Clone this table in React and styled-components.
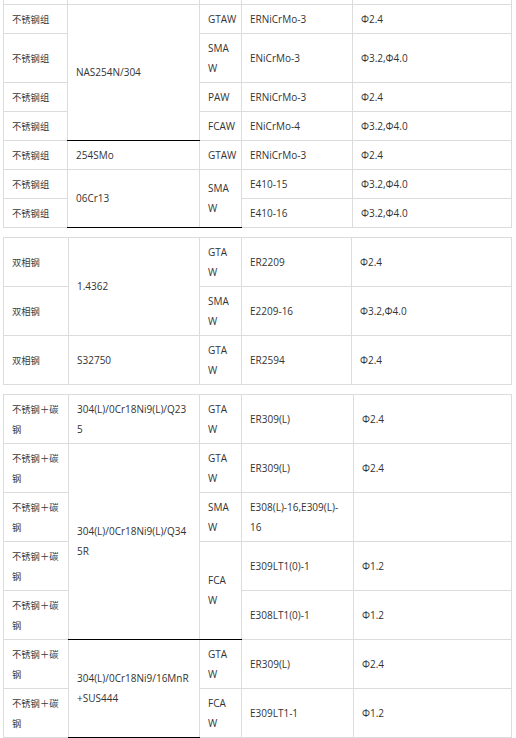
import React from "react";
import styled, { createGlobalStyle } from "styled-components";

const GlobalStyle = createGlobalStyle`
  html, body {
    margin: 0;
    padding: 0;
    background: #fff;
  }
  body {
    font-family: "Open Sans", "Noto Sans CJK SC", sans-serif;
  }
`;

const Page = styled.div`
  width: 516px;
  padding-left: 3px;
  box-sizing: border-box;
`;

const Table = styled.table`
  border-collapse: collapse;
  table-layout: fixed;
  width: 508px;
  margin-bottom: 9px;
`;

const Col = styled.col`
  width: ${(p) => p.$w}px;
`;

const Cell = styled.td`
  border: 1px solid #dcdcdc;
  border-bottom-color: ${(p) => (p.$dark ? "#000" : "#dcdcdc")};
  padding: 4px 8px;
  font-size: 10px;
  line-height: 20px;
  color: #333;
  vertical-align: middle;
  white-space: pre;
  overflow: hidden;
`;

const Zh = styled.span`
  font-family: "Noto Sans CJK SC", sans-serif;
  font-size: 9.3px;
  color: #3a3a3a;
`;

const SpacerRow = styled.tr`
  height: 4px;
  td {
    padding: 0;
    border-top: none;
    line-height: 0;
  }
`;

const SS = <Zh>不锈钢组</Zh>;
const DP = <Zh>双相钢</Zh>;
const MX = <Zh>{"不锈钢＋碳\n钢"}</Zh>;

const TableOne = () => (
  <Table>
    <colgroup>
      {[64, 132, 42, 111, 159].map((w, i) => (
        <Col key={i} $w={w} />
      ))}
    </colgroup>
    <tbody>
      <SpacerRow>
        <Cell />
        <Cell />
        <Cell />
        <Cell />
        <Cell />
      </SpacerRow>
      <tr>
        <Cell>{SS}</Cell>
        <Cell rowSpan={4} $dark>
          NAS254N/304
        </Cell>
        <Cell>GTAW</Cell>
        <Cell>ERNiCrMo-3</Cell>
        <Cell>Φ2.4</Cell>
      </tr>
      <tr>
        <Cell>{SS}</Cell>
        <Cell>{"SMA\nW"}</Cell>
        <Cell>ENiCrMo-3</Cell>
        <Cell>Φ3.2,Φ4.0</Cell>
      </tr>
      <tr>
        <Cell>{SS}</Cell>
        <Cell>PAW</Cell>
        <Cell>ERNiCrMo-3</Cell>
        <Cell>Φ2.4</Cell>
      </tr>
      <tr>
        <Cell>{SS}</Cell>
        <Cell>FCAW</Cell>
        <Cell>ENiCrMo-4</Cell>
        <Cell>Φ3.2,Φ4.0</Cell>
      </tr>
      <tr>
        <Cell>{SS}</Cell>
        <Cell>254SMo</Cell>
        <Cell>GTAW</Cell>
        <Cell>ERNiCrMo-3</Cell>
        <Cell>Φ2.4</Cell>
      </tr>
      <tr>
        <Cell>{SS}</Cell>
        <Cell rowSpan={2} $dark>
          06Cr13
        </Cell>
        <Cell rowSpan={2} $dark>
          {"SMA\nW"}
        </Cell>
        <Cell>E410-15</Cell>
        <Cell>Φ3.2,Φ4.0</Cell>
      </tr>
      <tr>
        <Cell>{SS}</Cell>
        <Cell>E410-16</Cell>
        <Cell>Φ3.2,Φ4.0</Cell>
      </tr>
    </tbody>
  </Table>
);

const TableTwo = () => (
  <Table>
    <colgroup>
      {[65, 131, 42, 110, 160].map((w, i) => (
        <Col key={i} $w={w} />
      ))}
    </colgroup>
    <tbody>
      <tr>
        <Cell>{DP}</Cell>
        <Cell rowSpan={2}>1.4362</Cell>
        <Cell>{"GTA\nW"}</Cell>
        <Cell>ER2209</Cell>
        <Cell>Φ2.4</Cell>
      </tr>
      <tr>
        <Cell>{DP}</Cell>
        <Cell>{"SMA\nW"}</Cell>
        <Cell>E2209-16</Cell>
        <Cell>Φ3.2,Φ4.0</Cell>
      </tr>
      <tr>
        <Cell>{DP}</Cell>
        <Cell>S32750</Cell>
        <Cell>{"GTA\nW"}</Cell>
        <Cell>ER2594</Cell>
        <Cell>Φ2.4</Cell>
      </tr>
    </tbody>
  </Table>
);

const TableThree = () => (
  <Table>
    <colgroup>
      {[65, 131, 42, 112, 158].map((w, i) => (
        <Col key={i} $w={w} />
      ))}
    </colgroup>
    <tbody>
      <tr>
        <Cell>{MX}</Cell>
        <Cell>{"304(L)/0Cr18Ni9(L)/Q23\n5"}</Cell>
        <Cell>{"GTA\nW"}</Cell>
        <Cell>ER309(L)</Cell>
        <Cell>Φ2.4</Cell>
      </tr>
      <tr>
        <Cell>{MX}</Cell>
        <Cell rowSpan={4} $dark>
          {"304(L)/0Cr18Ni9(L)/Q34\n5R"}
        </Cell>
        <Cell>{"GTA\nW"}</Cell>
        <Cell>ER309(L)</Cell>
        <Cell>Φ2.4</Cell>
      </tr>
      <tr>
        <Cell>{MX}</Cell>
        <Cell>{"SMA\nW"}</Cell>
        <Cell>{"E308(L)-16,E309(L)-\n16"}</Cell>
        <Cell />
      </tr>
      <tr>
        <Cell>{MX}</Cell>
        <Cell rowSpan={2} $dark>
          {"FCA\nW"}
        </Cell>
        <Cell>E309LT1(0)-1</Cell>
        <Cell>Φ1.2</Cell>
      </tr>
      <tr>
        <Cell>{MX}</Cell>
        <Cell>E308LT1(0)-1</Cell>
        <Cell>Φ1.2</Cell>
      </tr>
      <tr>
        <Cell>{MX}</Cell>
        <Cell rowSpan={2} $dark>
          {"304(L)/0Cr18Ni9/16MnR\n+SUS444"}
        </Cell>
        <Cell>{"GTA\nW"}</Cell>
        <Cell>ER309(L)</Cell>
        <Cell>Φ2.4</Cell>
      </tr>
      <tr>
        <Cell>{MX}</Cell>
        <Cell>{"FCA\nW"}</Cell>
        <Cell>E309LT1-1</Cell>
        <Cell>Φ1.2</Cell>
      </tr>
    </tbody>
  </Table>
);

export default function App() {
  return (
    <>
      <GlobalStyle />
      <Page>
        <TableOne />
        <TableTwo />
        <TableThree />
      </Page>
    </>
  );
}
